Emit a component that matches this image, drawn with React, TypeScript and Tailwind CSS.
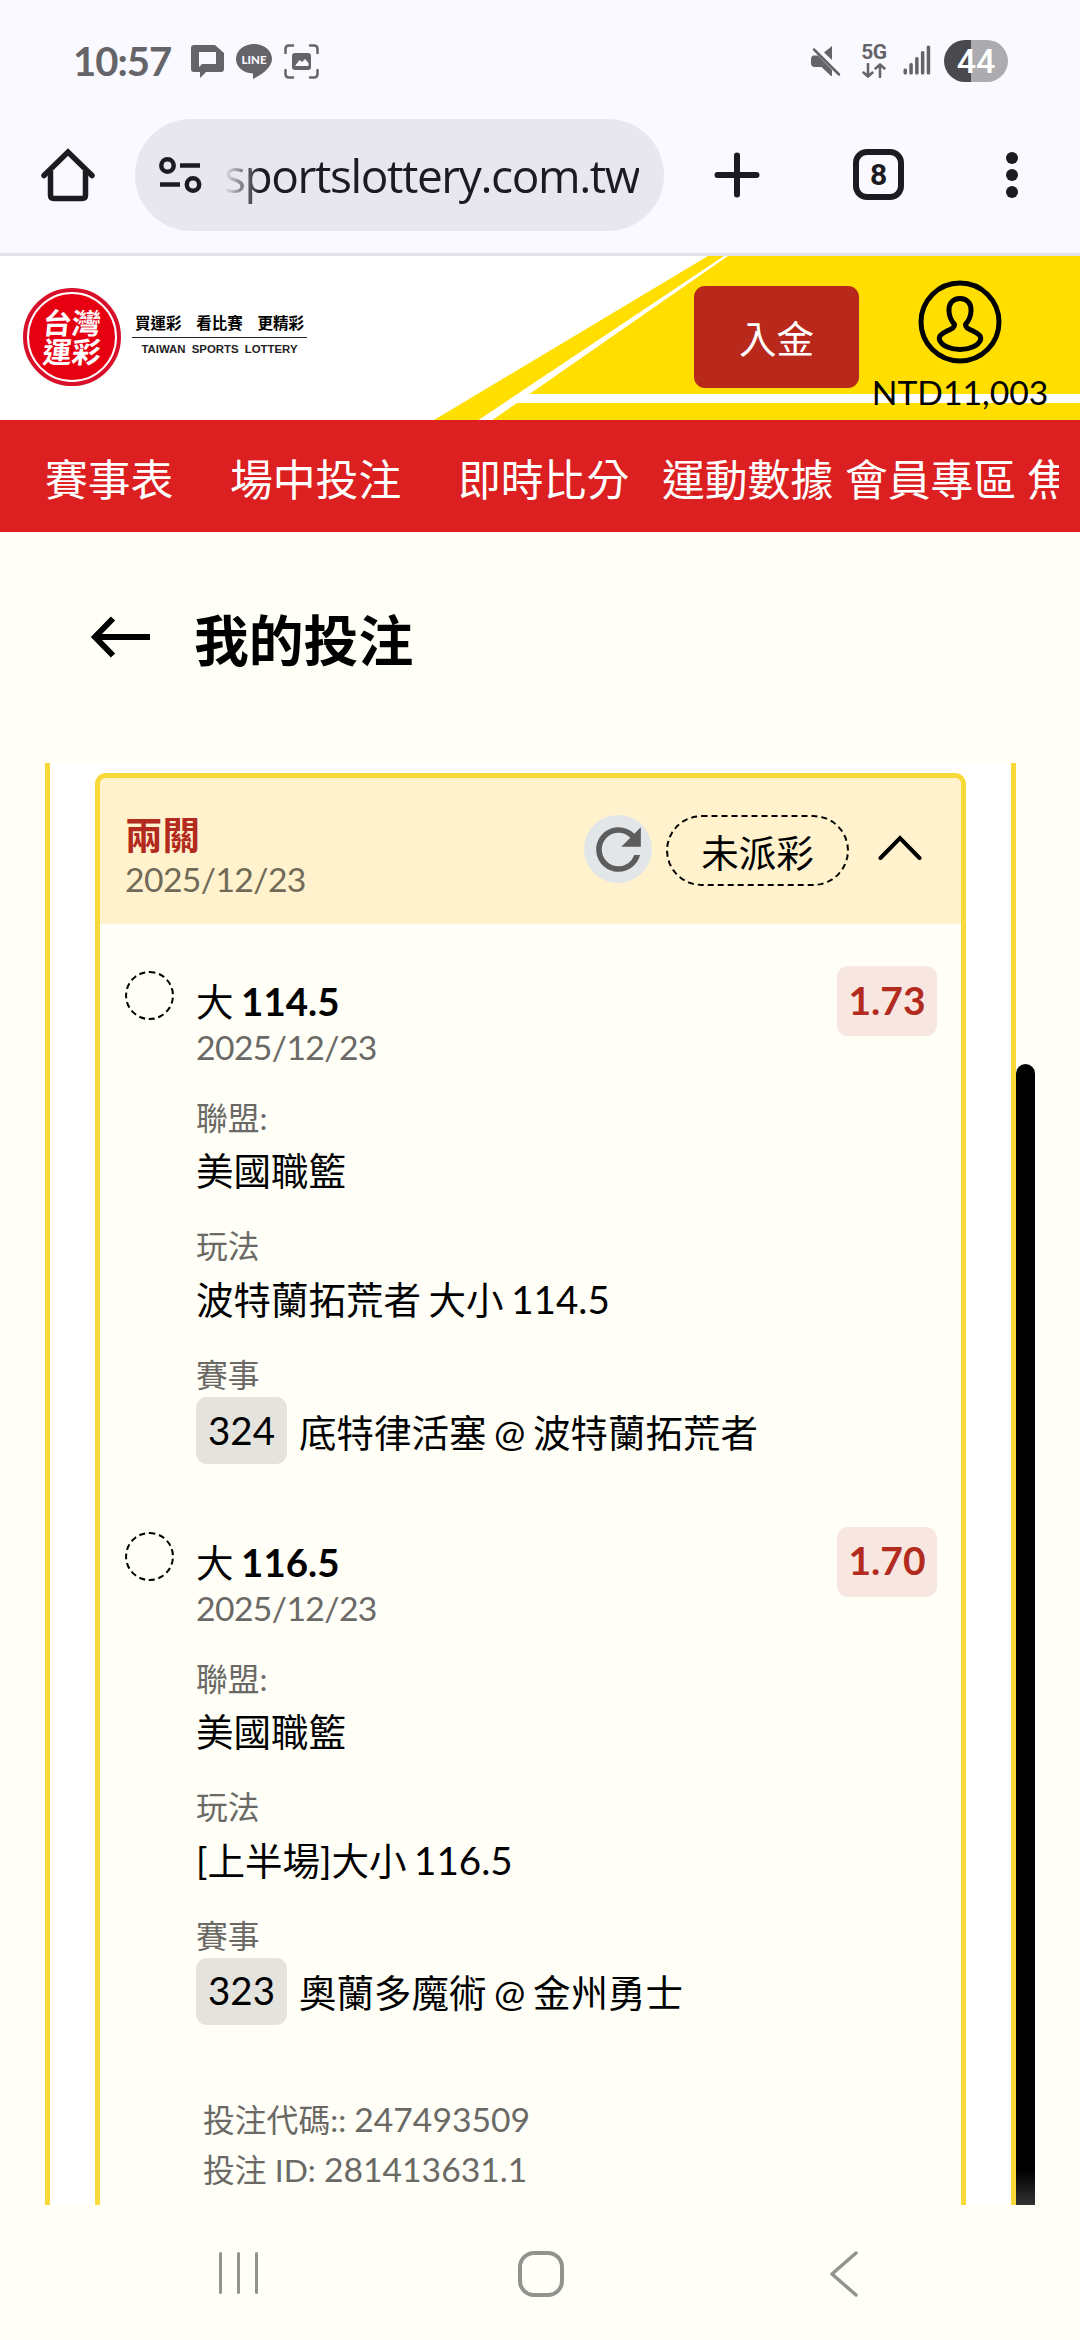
import { MdRefresh } from "react-icons/md";

type Leg = {
  pick: string;
  line: string;
  date: string;
  odds: string;
  league: string;
  market: string;
  code: string;
  event: string;
};

const navLinks = [
  { name: "賽事表", width: "w-[185px]" },
  { name: "場中投注", width: "w-[228px]" },
  { name: "即時比分", width: "w-[204px]" },
  { name: "運動數據", width: "w-[183px]" },
  { name: "會員專區", width: "w-[182px]" },
  { name: "焦", width: "w-[43px]" },
];

const legs: Leg[] = [
  {
    pick: "大",
    line: "114.5",
    date: "2025/12/23",
    odds: "1.73",
    league: "美國職籃",
    market: "波特蘭拓荒者 大小",
    code: "324",
    event: "底特律活塞 @ 波特蘭拓荒者",
  },
  {
    pick: "大",
    line: "116.5",
    date: "2025/12/23",
    odds: "1.70",
    league: "美國職籃",
    market: "[上半場]大小",
    code: "323",
    event: "奧蘭多魔術 @ 金州勇士",
  },
];

function StatusBar() {
  return (
    <div className="flex h-[119px] items-start pl-[73px] pr-[72px] pt-[40px] text-[#656469]">
      <span className="w-[118px] text-[40px] font-bold leading-[42px] tracking-[-1px]">10:57</span>
      <svg className="mt-[5px] h-[33px] w-[33px]" viewBox="0 0 33 33" fill="currentColor">
        <path
          fillRule="evenodd"
          d="M3 0H24L33 8V24Q33 27 30 27H15L9 33V27H3Q0 27 0 24V3Q0 0 3 0ZM8 7V22L11 19H25V7Z"
        />
      </svg>
      <svg className="ml-[12px] mt-[4px] h-[35px] w-[36px]" viewBox="0 0 36 35">
        <path
          d="M18 0C28 0 36 6.500 36 15C36 23 27 30 17 35V29.500C7 29 0 23 0 15C0 6.500 8 0 18 0Z"
          fill="currentColor"
        />
        <text x="18" y="20" textAnchor="middle" fontSize="11.500" fontWeight="900" fill="#faf9ff">
          LINE
        </text>
      </svg>
      <svg className="ml-[12px] mt-[4px] h-[35px] w-[35px]" viewBox="0 0 35 35" fill="none" stroke="currentColor" strokeWidth="2.500" strokeLinecap="round">
        <path d="M1.500 9V5Q1.500 1.500 5 1.500H9M26 1.500H30Q33.500 1.500 33.500 5V9M33.500 26V30Q33.500 33.500 30 33.500H26M9 33.500H5Q1.500 33.500 1.500 30V26" />
        <rect x="8" y="9" width="19" height="17" rx="3" fill="currentColor" stroke="none" />
        <path d="M11 22L15.500 16L18 18L21 15L24.500 19V22Z" fill="#faf9ff" stroke="none" />
      </svg>

      <div className="ml-auto flex items-start">
        <svg className="mt-[6px] h-[31px] w-[30px]" viewBox="0 0 30 31" fill="currentColor">
          <path d="M21 0V14L13 6.500Z" />
          <path d="M2 9.500H7L21 24V30H20L10.500 21H4Q0 21 0 17V13Q0 10 2 9.500Z" />
          <path d="M3 3.500L28 28.500" stroke="currentColor" strokeWidth="2.500" strokeLinecap="round" />
        </svg>
        <div className="ml-[19px] flex w-[28px] flex-col items-center pt-[4px]">
          <span className="font-[Roboto] text-[21px] font-bold leading-[17px] tracking-[-0.5px]">5G</span>
          <svg className="mt-[2px] h-[15px] w-[24px]" viewBox="0 0 24 15" fill="none" stroke="currentColor" strokeWidth="2.500" strokeLinecap="round" strokeLinejoin="round">
            <path d="M6 1V13.500M1.500 9.500L6 13.500L10.500 9.500M18 14V1.500M13.500 5.500L18 1.500L22.500 5.500" />
          </svg>
        </div>
        <svg className="ml-[15px] mt-[5px] h-[31px] w-[28px]" viewBox="0 0 28 31" fill="currentColor">
          <rect x="0.500" y="23.500" width="3.500" height="6" rx="1.500" />
          <rect x="6.300" y="18" width="3.500" height="11.500" rx="1.500" />
          <rect x="12.100" y="12" width="3.500" height="17.500" rx="1.500" />
          <rect x="17.900" y="6" width="3.500" height="23.500" rx="1.500" />
          <rect x="23.700" y="0.500" width="3.500" height="29" rx="1.500" />
        </svg>
        <div className="ml-[13px] flex h-[42px] w-[64px] items-center justify-center rounded-full bg-[linear-gradient(to_right,#4a494d_42%,#acabaf_42%)] font-[Roboto] text-[34px] font-medium leading-none text-white">
          44
        </div>
      </div>
    </div>
  );
}

function BrowserBar() {
  return (
    <div className="flex h-[137px] items-start border-b-[3px] border-[#e2e1e8] pl-[41px] text-[#1b1b21]">
      <svg className="mt-[29px] h-[54px] w-[54px]" viewBox="0 0 54 54" fill="none" stroke="currentColor" strokeWidth="5.500">
        <path d="M3 27.500L27 4L51 27.500" strokeLinejoin="miter" strokeLinecap="round" />
        <path d="M9.500 23V47Q9.500 50.500 13 50.500H41Q44.500 50.500 44.500 47V23" />
      </svg>
      <div className="ml-[40px] flex h-[112px] w-[529px] items-center rounded-full bg-[#e8e6ef] pl-[24px]">
        <svg className="h-[36px] w-[43px]" viewBox="0 0 43 36" fill="none" stroke="currentColor" strokeWidth="4.500">
          <circle cx="8.500" cy="8.500" r="6.200" />
          <circle cx="34" cy="27.500" r="6.200" />
          <path d="M21 8.500H41M1 27.500H21" />
        </svg>
        <span className="ml-[22px] whitespace-nowrap font-['Open_Sans'] text-[46px] leading-[80px] tracking-[-1.4px] [mask-image:linear-gradient(to_right,transparent,black_36px)]">
          sportslottery.com.tw
        </span>
      </div>
      <svg className="ml-[50px] mt-[33px] h-[46px] w-[46px]" viewBox="0 0 46 46" stroke="currentColor" strokeWidth="6" strokeLinecap="round">
        <path d="M23 3.500V42.500M3.500 23H42.500" />
      </svg>
      <div className="ml-[93px] mt-[30px] flex h-[51px] w-[51px] items-center justify-center rounded-[14px] border-[6px] border-[#1b1b21] font-[Roboto] text-[30px] font-bold leading-none">
        8
      </div>
      <div className="ml-[102px] mt-[33px] flex flex-col gap-[5px]">
        <i className="size-[12px] rounded-full bg-[#1b1b21]" />
        <i className="size-[12px] rounded-full bg-[#1b1b21]" />
        <i className="size-[12px] rounded-full bg-[#1b1b21]" />
      </div>
    </div>
  );
}

function SiteHeader() {
  return (
    <header className="relative flex h-[164px] bg-white">
      {/* diagonal yellow banner behind the account area */}
      <svg className="absolute inset-0 h-[164px] w-[1080px]" viewBox="0 0 1080 164">
        <path d="M708 0H1080V164H434Z" fill="#ffde00" />
        <path d="M724 0H728L529.500 138H1080V147H517L492.500 164H478.500Z" fill="#fff" />
      </svg>
      <div className="relative flex w-full">
        <div className="ml-[23px] mt-[32px] flex size-[98px] items-center justify-center rounded-full border-[4px] border-[#d8102a] bg-[#e60012]">
          <div className="flex size-[90px] flex-col items-center justify-center rounded-full border-[2px] border-white text-[29px] font-bold leading-[29px] text-white">
            <span className="-skew-x-6">台灣</span>
            <span className="-skew-x-6">運彩</span>
          </div>
        </div>
        <div className="ml-[11px] mt-[58px] w-[175px]">
          <div className="flex h-[24px] justify-between border-b border-[#222] px-[3px] text-[15.500px] font-bold leading-[18px] text-black">
            <span>買運彩</span>
            <span>看比賽</span>
            <span>更精彩</span>
          </div>
          <div className="pt-[2px] text-center font-['Liberation_Sans'] text-[11.400px] font-bold leading-[18px] text-[#222] [word-spacing:3px]">
            TAIWAN SPORTS LOTTERY
          </div>
        </div>
        <button className="ml-[387px] mt-[30px] h-[102px] w-[165px] rounded-[11px] bg-[#b8281b] pt-[3px] text-[37.500px] leading-none text-white">
          入金
        </button>
        <div className="ml-[11px] flex w-[180px] flex-col items-center pt-[24px]">
          <svg className="h-[84px] w-[84px]" viewBox="0 0 84 84" fill="none" stroke="#000" strokeWidth="5">
            <circle cx="42" cy="42" r="39" />
            <path
              strokeLinejoin="round"
              d="M42 18.500C49 18.500 53.500 23.500 53 31C52.800 37 50.500 41 47.500 44.500C47.500 48 50 48.500 55 51C61 54 63.500 56 62.500 60C60 66 51 69.500 42 69.500C33 69.500 24 66 21.500 60C20.500 56 23 54 29 51C34 48.500 36.500 48 36.500 44.500C33.500 41 31.200 37 31 31C30.500 23.500 35 18.500 42 18.500Z"
            />
          </svg>
          <span className="mt-[8px] whitespace-nowrap text-[33.700px] leading-[40px] text-black">NTD11,003</span>
        </div>
      </div>
    </header>
  );
}

function LegItem({ leg }: { leg: Leg }) {
  return (
    <div className="flex items-start">
      <div className="size-[49px] shrink-0 rounded-full border-2 border-dashed border-black" />
      <div className="ml-[22px] flex flex-1 flex-col [word-spacing:-2px]">
        <div className="mt-[7px] h-[46px] text-[37.500px] leading-[46px] text-black">
          {leg.pick} <b className="text-[38.500px] font-bold">{leg.line}</b>
        </div>
        <div className="h-[46px] text-[33.700px] leading-[46px] tracking-[-0.6px] text-[#6a6965]">{leg.date}</div>

        <div className="mt-[26px] h-[44px] text-[31.800px] leading-[44px] text-[#6a6965]">聯盟:</div>
        <div className="h-[62px] text-[37.500px] leading-[62px] text-black">{leg.league}</div>

        <div className="mt-[22px] h-[44px] text-[31.800px] leading-[44px] text-[#6a6965]">玩法</div>
        <div className="h-[62px] text-[37.500px] leading-[62px] text-black">
          {leg.market} <span className="text-[38.600px]">{leg.line}</span>
        </div>

        <div className="mt-[23px] h-[44px] text-[31.800px] leading-[44px] text-[#6a6965]">賽事</div>
        <div className="flex h-[67px] items-center whitespace-nowrap text-[37.500px] text-black">
          <span className="flex h-[67px] w-[91px] items-center justify-center rounded-[11px] bg-[#e5e3dd] text-[38.500px]">
            {leg.code}
          </span>
          <span className="ml-[12px] pt-[4px] leading-[50px]">{leg.event}</span>
        </div>
      </div>
      <span className="-mt-[5px] flex h-[70px] w-[100px] items-center justify-center rounded-[11px] bg-[#f7e7e0] pb-[2px] text-[39px] font-bold leading-none text-[#b32a1e]">
        {leg.odds}
      </span>
    </div>
  );
}

function BetCard() {
  return (
    <section className="w-[871px] rounded-t-[11px] border-x-[5px] border-t-[5px] border-[#f8d93a] bg-[#fffef7]">
      <div className="flex h-[146px] items-start rounded-t-[6px] bg-[#fff2cc] pl-[25px] pr-[39px]">
        <div className="mt-[34px]">
          <div className="text-[37.500px] font-bold leading-[45px] text-[#b32a1e]">兩關</div>
          <div className="text-[33.700px] leading-[45px] tracking-[-0.6px] text-[#706a58]">2025/12/23</div>
        </div>
        <button className="ml-auto mt-[37px] flex size-[68px] items-center justify-center rounded-full bg-[#e2e6e9]">
          <MdRefresh className="size-[67px] text-[#5c5c5c]" />
        </button>
        <span className="ml-[14px] mt-[37px] flex h-[71px] w-[183px] items-center justify-center rounded-[36px] border-2 border-dashed border-black pt-[5px] text-[37.500px] leading-none text-black">
          未派彩
        </span>
        <svg className="ml-[29px] mt-[57px] h-[26px] w-[44px]" viewBox="0 0 44 26" fill="none" stroke="#000" strokeWidth="4" strokeLinecap="round">
          <path d="M2.500 23L22 3L41.500 23" />
        </svg>
      </div>

      <div className="flex flex-col gap-[67.500px] pl-[25px] pr-[24px] pt-[47px]">
        {legs.map((leg) => (
          <LegItem key={leg.code} leg={leg} />
        ))}
      </div>

      <div className="ml-[103px] mt-[70px] h-[111px] text-[31.800px] leading-[49px] text-[#6a6965]">
        <div>
          投注代碼:: <span className="text-[33.700px]">247493509</span>
        </div>
        <div>
          投注 ID: <span className="text-[33.700px]">281413631.1</span>
        </div>
      </div>
    </section>
  );
}

export default function App() {
  return (
    <div className="flex h-[2340px] w-[1080px] flex-col overflow-hidden bg-[#fffef7] font-[Lato,'Noto_Sans_CJK_TC',sans-serif]">
      <div className="shrink-0 bg-[#faf9ff]">
        <StatusBar />
        <BrowserBar />
      </div>
      <SiteHeader />

      <nav className="h-[112px] shrink-0 bg-[#dc1f20] pl-[45px] pr-[21px]">
        <div className="flex h-full items-center overflow-hidden whitespace-nowrap pt-[8px] text-[42.800px] leading-[60px] text-white">
          {navLinks.map((link) => (
            <a key={link.name} className={`shrink-0 ${link.width}`}>
              {link.name}
            </a>
          ))}
        </div>
      </nav>

      <div className="flex h-[231px] shrink-0 items-start pl-[90px] pt-[78px]">
        <svg className="mt-[6px] h-[42px] w-[60px]" viewBox="0 0 60 42" fill="none" stroke="#000" strokeWidth="6">
          <path d="M60 21H6M23 2.500L5 21L23 39.500" />
        </svg>
        <h1 className="ml-[44px] text-[54.800px] font-bold leading-[60px] text-black">我的投注</h1>
      </div>

      <main className="flex h-[1442px] shrink-0 overflow-hidden pl-[45px]">
        <div className="h-full w-[971px] border-x-[5px] border-[#f8d93a] bg-white pl-[45px] pt-[10px]">
          <BetCard />
        </div>
        <div className="mt-[301px] w-[19px] rounded-t-full bg-[linear-gradient(to_bottom,#000_97%,#333_100%)]" />
      </main>

      <footer className="flex h-[135px] items-start pt-[46px] text-[#92928e]">
        <div className="ml-[219px] flex h-[43px] gap-[15px] pt-px">
          <i className="w-[3px] rounded-full bg-[#92928e]" />
          <i className="w-[3px] rounded-full bg-[#92928e]" />
          <i className="w-[3px] rounded-full bg-[#92928e]" />
        </div>
        <div className="ml-[260px] size-[46px] rounded-[16px] border-[4px] border-[#92928e]" />
        <svg className="ml-[265px] h-[46px] w-[29px]" viewBox="0 0 29 46" fill="none" stroke="currentColor" strokeWidth="3.500" strokeLinecap="round" strokeLinejoin="round">
          <path d="M27 2L3 23L27 44" />
        </svg>
      </footer>
    </div>
  );
}
